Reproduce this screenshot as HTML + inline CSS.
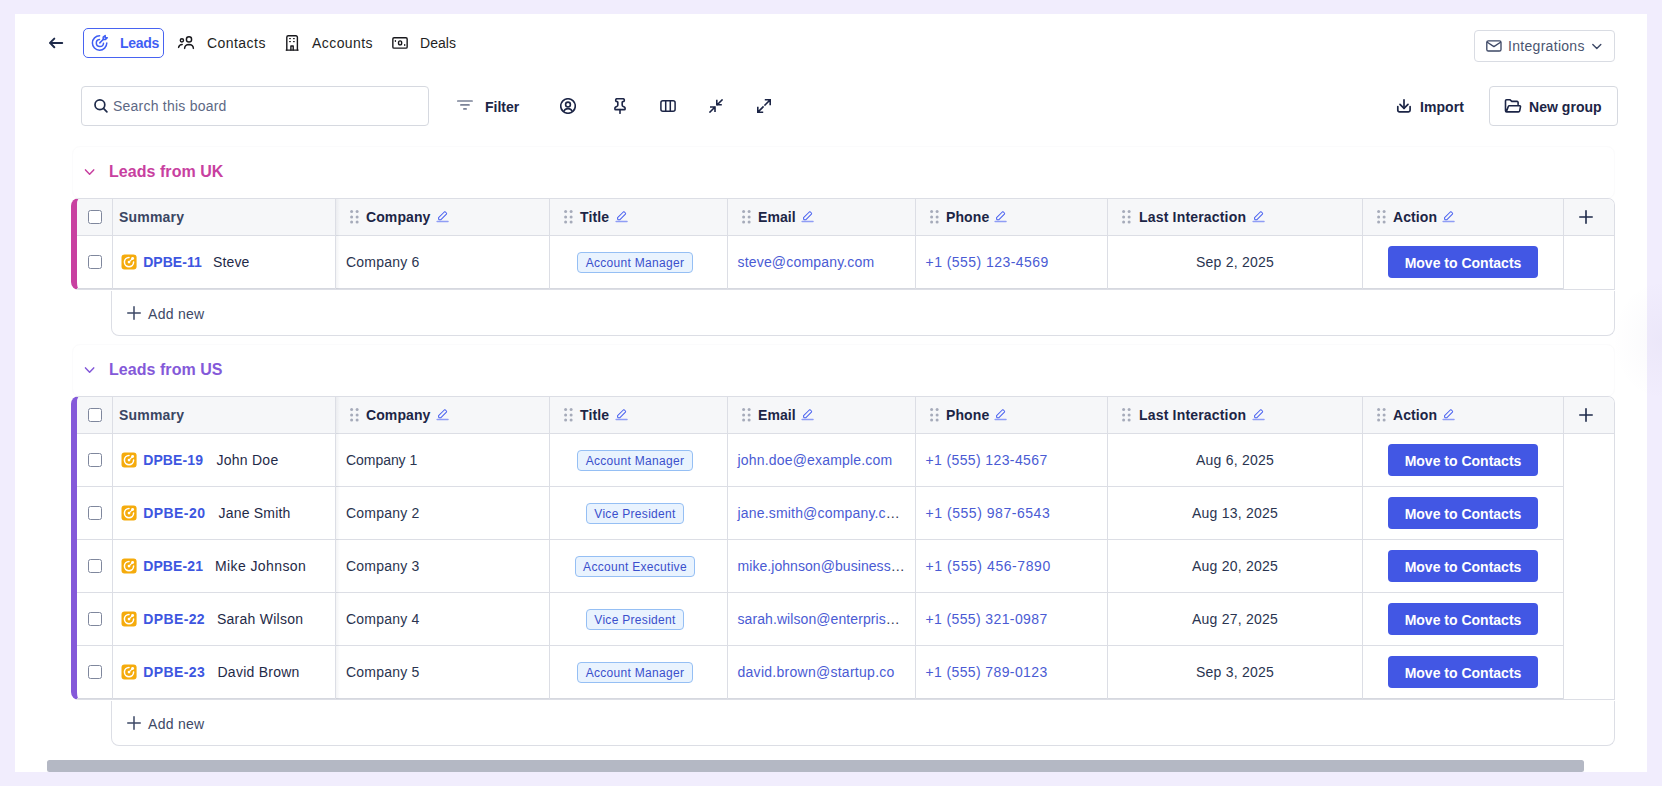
<!DOCTYPE html>
<html><head><meta charset="utf-8"><style>
html,body{margin:0;padding:0}
body{width:1662px;height:786px;overflow:hidden;background:#f1edfd;position:relative;font-family:"Liberation Sans",sans-serif}
.card{position:absolute;left:15px;top:14px;width:1632px;height:758px;background:#fff}
.t{position:absolute;height:20px;line-height:20px;white-space:nowrap}
.badge{position:absolute;height:21px;box-sizing:border-box;border:1px solid #95bff4;background:#e9f3fe;border-radius:4px;color:#3a4fcc;font-size:12px;line-height:20px;text-align:center;white-space:nowrap;letter-spacing:0.3px}
.btn{position:absolute;width:150px;height:32px;background:#4257e4;border-radius:4px;color:#fff;font-size:14px;font-weight:700;line-height:34px;text-align:center;white-space:nowrap}
</style></head><body>
<div class="card"></div>
<svg style="position:absolute;left:44px;top:30px" width="26" height="26" viewBox="0 0 26 26" fill="none" stroke="#1e2a4a" stroke-width="2" stroke-linecap="round" stroke-linejoin="round"><path d="M6 12.9h12.2M6 12.9l4.3-4.3M6 12.9l4.3 4.3"/></svg>
<div style="position:absolute;left:83px;top:28px;width:81px;height:30px;border:1px solid #4863f1;border-radius:5px;box-sizing:border-box"></div>
<svg style="position:absolute;left:86px;top:30px" width="30" height="26" viewBox="0 0 30 26" fill="none" stroke="#3f5ef4" stroke-width="1.5" stroke-linecap="round" stroke-linejoin="round"><path d="M13.6 5.8A7.2 7.2 0 1 0 20.8 13.1"/><path d="M13.5 9.4A3.6 3.6 0 1 0 17.5 13.3"/><path d="M13.8 12.9L17.4 9.3"/><path d="M17.2 7.2v2.3h2.3l1.8-1.8h-2.1v-2.1z"/></svg>
<div class="t" style="left:120px;top:33.0px;font-size:14px;font-weight:700;color:#3f5ef4;letter-spacing:-0.3px;">Leads</div>
<svg style="position:absolute;left:174px;top:30px" width="30" height="26" viewBox="0 0 30 26" fill="none" stroke="#18181c" stroke-width="1.45" stroke-linecap="round" stroke-linejoin="round"><circle cx="7.9" cy="10.3" r="1.6"/><circle cx="15" cy="9.4" r="2.6"/><path d="M4.6 17.4Q5.2 14.6 8.2 14.5"/><path d="M10.6 18.4Q10.9 14.6 15 14.5Q19.1 14.6 19.4 18.4"/></svg>
<div class="t" style="left:207px;top:33.0px;font-size:14px;font-weight:400;color:#1f1f24;letter-spacing:0.45px;">Contacts</div>
<svg style="position:absolute;left:280px;top:30px" width="24" height="26" viewBox="0 0 24 26" fill="none" stroke="#18181c" stroke-width="1.4" stroke-linecap="round" stroke-linejoin="round"><path d="M6.2 20.1h11.9"/><path d="M6.8 20.1V7.2a1.5 1.5 0 0 1 1.5-1.5h7.6a1.5 1.5 0 0 1 1.5 1.5v12.9"/><path d="M9.7 8.6h.6M13.6 8.6h.6M9.7 11.6h.6M13.6 11.6h.6"/><path d="M10.9 20.1v-4.1h2.3v4.1"/></svg>
<div class="t" style="left:312px;top:33.0px;font-size:14px;font-weight:400;color:#1f1f24;letter-spacing:0.43px;">Accounts</div>
<svg style="position:absolute;left:386px;top:30px" width="28" height="26" viewBox="0 0 28 26" fill="none" stroke="#18181c" stroke-width="1.4" stroke-linecap="round" stroke-linejoin="round"><rect x="6.85" y="7.75" width="14.3" height="10.4" rx="1.2"/><ellipse cx="14.1" cy="12.9" rx="1.6" ry="2"/><path d="M9.4 10.6v.6M18.7 14.7v.6"/></svg>
<div class="t" style="left:420px;top:33.0px;font-size:14px;font-weight:400;color:#1f1f24;letter-spacing:0.05px;">Deals</div>
<div style="position:absolute;left:1474px;top:30px;width:141px;height:32px;border:1px solid #d9dce3;border-radius:4px;box-sizing:border-box"></div>
<svg style="position:absolute;left:1480px;top:34px" width="30" height="24" viewBox="0 0 30 24" fill="none" stroke="#3d4866" stroke-width="1.35" stroke-linecap="round" stroke-linejoin="round"><rect x="6.8" y="6.8" width="14.2" height="10.2" rx="1.6"/><path d="M7.3 8.2l6.6 4.4 6.6-4.4"/></svg>
<div class="t" style="left:1508px;top:36.0px;font-size:14px;font-weight:400;color:#4a5570;letter-spacing:0.3px;">Integrations</div>
<svg style="position:absolute;left:1588px;top:40px" width="18" height="14" viewBox="0 0 18 14" fill="none" stroke="#3d4866" stroke-width="1.4" stroke-linecap="round" stroke-linejoin="round"><path d="M4.8 4.6l4 4 4-4"/></svg>
<div style="position:absolute;left:81px;top:86px;width:348px;height:40px;border:1px solid #d6d9e0;border-radius:4px;box-sizing:border-box"></div>
<svg style="position:absolute;left:88px;top:94px" width="26" height="24" viewBox="0 0 26 24" fill="none" stroke="#1e2a4a" stroke-width="1.7" stroke-linecap="round"><circle cx="11.9" cy="10.8" r="4.9"/><path d="M15.5 14.4l3.4 3.4"/></svg>
<div class="t" style="left:113px;top:96.0px;font-size:14px;font-weight:400;color:#5d6884;letter-spacing:0.23px;">Search this board</div>
<svg style="position:absolute;left:450px;top:92px" width="30" height="26" viewBox="0 0 30 26" fill="none" stroke="#7b8398" stroke-width="1.7" stroke-linecap="round"><path d="M7.8 9h14.3M10.9 12.9h8.1M13.9 16.9h2.2"/></svg>
<div class="t" style="left:485px;top:96.5px;font-size:14px;font-weight:700;color:#1c2546;letter-spacing:0px;">Filter</div>
<svg style="position:absolute;left:560px;top:98px;" width="16" height="16" viewBox="1 1 22 22" fill="none" stroke="#1c2546" stroke-width="2.2" stroke-linecap="round" stroke-linejoin="round"><circle cx="12" cy="12" r="10"/><circle cx="12" cy="10" r="3.3"/><path d="M6.2 19.2a6.5 6.5 0 0 1 11.6 0"/></svg>
<svg style="position:absolute;left:611.8px;top:98px;" width="16" height="16" viewBox="1 1 22 22" fill="none" stroke="#1c2546" stroke-width="2.2" stroke-linecap="round" stroke-linejoin="round"><path d="M12 17v5"/><path d="M9 10.76a2 2 0 0 1-1.11 1.79l-1.78.9A2 2 0 0 0 5 15.24V16a1 1 0 0 0 1 1h12a1 1 0 0 0 1-1v-.76a2 2 0 0 0-1.11-1.79l-1.78-.9A2 2 0 0 1 15 10.76V7a1 1 0 0 1 1-1 2 2 0 0 0 0-4H8a2 2 0 0 0 0 4 1 1 0 0 1 1 1z"/></svg>
<svg style="position:absolute;left:659px;top:98px;" width="18" height="16" viewBox="0 0 18 16" fill="none" stroke="#1c2546" stroke-width="1.5" stroke-linecap="round" stroke-linejoin="round"><rect x="1.9" y="2.75" width="14.2" height="10.6" rx="2"/><path d="M6.7 2.75v10.6M11.3 2.75v10.6"/></svg>
<svg style="position:absolute;left:709px;top:99px" width="14" height="14" viewBox="0 0 14 14" fill="none" stroke="#1c2546" stroke-width="1.6" stroke-linecap="square"><path d="M13 1L8.2 5.8M7.8 1.6v4.2h4.2M1 13l4.8-4.8M1.8 8h4.2v4.2"/></svg>
<svg style="position:absolute;left:757px;top:99px" width="14" height="14" viewBox="0 0 14 14" fill="none" stroke="#1c2546" stroke-width="1.6" stroke-linecap="square"><path d="M8.6 0.8h4.6v4.6M13 1L8 6M0.8 8.6v4.6h4.6M1 13l5-5"/></svg>
<svg style="position:absolute;left:1390px;top:94px" width="26" height="26" viewBox="0 0 26 26" fill="none" stroke="#1c2546" stroke-width="1.7" stroke-linecap="round" stroke-linejoin="round"><path d="M7.8 12.6v3.6a1.6 1.6 0 0 0 1.6 1.6h9.1a1.6 1.6 0 0 0 1.6-1.6v-3.6"/><path d="M10 10.3l4 4 4-4"/><path d="M14 5.8v8.5"/></svg>
<div class="t" style="left:1420px;top:97.0px;font-size:14px;font-weight:700;color:#1c2546;letter-spacing:0.07px;">Import</div>
<div style="position:absolute;left:1489px;top:86px;width:129px;height:40px;border:1px solid #d6d9e0;border-radius:4px;box-sizing:border-box"></div>
<svg style="position:absolute;left:1504px;top:98px" width="18" height="16" viewBox="0 0 18 16" fill="none" stroke="#1c2546" stroke-width="1.6" stroke-linecap="round" stroke-linejoin="round"><path d="M2.3 13.9l2.1-5.6a1 1 0 0 1 .9-.6h10.4a.8.8 0 0 1 .8 1l-.8 4.1a1.4 1.4 0 0 1-1.4 1.1H2.6a1.1 1.1 0 0 1-1.1-1.1V2.8A1.1 1.1 0 0 1 2.6 1.7h3.2l2 1.7h5.2a1.1 1.1 0 0 1 1.1 1.1v1.9"/></svg>
<div class="t" style="left:1529px;top:97.0px;font-size:14px;font-weight:700;color:#1c2546;letter-spacing:0.04px;">New group</div>
<svg style="position:absolute;left:80px;top:164px" width="20" height="16" viewBox="0 0 20 16" fill="none" stroke="#c840a0" stroke-width="1.5" stroke-linecap="round" stroke-linejoin="round"><path d="M5.5 5.9L9.6 10.2L13.7 5.9"/></svg>
<div class="t" style="left:109px;top:162.0px;font-size:16px;font-weight:700;color:#c840a0;letter-spacing:0.05px;">Leads from UK</div>
<div style="position:absolute;left:72px;top:146px;width:1543px;height:53px;border:1px solid #fbfbfc;border-radius:8px;box-sizing:border-box"></div>
<div style="position:absolute;left:71px;top:198px;width:1544px;height:92px;box-sizing:border-box;border:1px solid #dcdee5;border-left:6px solid #c840a0;border-radius:8px 7px 0 8px;overflow:hidden;background:#fff">
<div style="position:absolute;left:0;top:0;right:0;height:36px;background:#f6f7f9;border-bottom:1px solid #dcdee5"></div>
<div style="position:absolute;left:0;top:37px;width:1486px;height:53px;border-bottom:1px solid #dcdee5;box-sizing:border-box"></div>
</div>
<div style="position:absolute;left:77px;top:288px;width:1486px;height:1px;background:#d6d8df"></div>
<div style="position:absolute;left:112px;top:199px;width:1px;height:90px;background:#dcdee5"></div>
<div style="position:absolute;left:335px;top:199px;width:1px;height:90px;background:#dcdee5"></div>
<div style="position:absolute;left:549px;top:199px;width:1px;height:90px;background:#dcdee5"></div>
<div style="position:absolute;left:727px;top:199px;width:1px;height:90px;background:#dcdee5"></div>
<div style="position:absolute;left:915px;top:199px;width:1px;height:90px;background:#dcdee5"></div>
<div style="position:absolute;left:1107px;top:199px;width:1px;height:90px;background:#dcdee5"></div>
<div style="position:absolute;left:1362px;top:199px;width:1px;height:90px;background:#dcdee5"></div>
<div style="position:absolute;left:1563px;top:199px;width:1px;height:90px;background:#dcdee5"></div>
<div style="position:absolute;left:336px;top:199px;width:4px;height:90px;background:linear-gradient(90deg,rgba(20,30,60,0.05),rgba(20,30,60,0))"></div>
<div style="position:absolute;left:88px;top:210px;width:14px;height:14px;border:1.1px solid #7f879d;border-radius:2.5px;box-sizing:border-box;background:#fff"></div>
<div class="t" style="left:119px;top:206.75px;font-size:14px;font-weight:700;color:#3a4562;letter-spacing:0.2px;">Summary</div>
<svg style="position:absolute;left:349.5px;top:210px" width="9" height="14" viewBox="0 0 9 14" fill="#a6abba"><circle cx="1.6" cy="1.6" r="1.5"/><circle cx="1.6" cy="6.9" r="1.5"/><circle cx="1.6" cy="12.1" r="1.5"/><circle cx="7.1" cy="1.6" r="1.5"/><circle cx="7.1" cy="6.9" r="1.5"/><circle cx="7.1" cy="12.1" r="1.5"/></svg>
<div class="t" style="left:366px;top:206.75px;font-size:14px;font-weight:700;color:#1c2546;letter-spacing:0.1px;">Company</div>
<svg style="position:absolute;left:563.5px;top:210px" width="9" height="14" viewBox="0 0 9 14" fill="#a6abba"><circle cx="1.6" cy="1.6" r="1.5"/><circle cx="1.6" cy="6.9" r="1.5"/><circle cx="1.6" cy="12.1" r="1.5"/><circle cx="7.1" cy="1.6" r="1.5"/><circle cx="7.1" cy="6.9" r="1.5"/><circle cx="7.1" cy="12.1" r="1.5"/></svg>
<div class="t" style="left:580px;top:206.75px;font-size:14px;font-weight:700;color:#1c2546;letter-spacing:0.1px;">Title</div>
<svg style="position:absolute;left:741.5px;top:210px" width="9" height="14" viewBox="0 0 9 14" fill="#a6abba"><circle cx="1.6" cy="1.6" r="1.5"/><circle cx="1.6" cy="6.9" r="1.5"/><circle cx="1.6" cy="12.1" r="1.5"/><circle cx="7.1" cy="1.6" r="1.5"/><circle cx="7.1" cy="6.9" r="1.5"/><circle cx="7.1" cy="12.1" r="1.5"/></svg>
<div class="t" style="left:758px;top:206.75px;font-size:14px;font-weight:700;color:#1c2546;letter-spacing:0.1px;">Email</div>
<svg style="position:absolute;left:929.5px;top:210px" width="9" height="14" viewBox="0 0 9 14" fill="#a6abba"><circle cx="1.6" cy="1.6" r="1.5"/><circle cx="1.6" cy="6.9" r="1.5"/><circle cx="1.6" cy="12.1" r="1.5"/><circle cx="7.1" cy="1.6" r="1.5"/><circle cx="7.1" cy="6.9" r="1.5"/><circle cx="7.1" cy="12.1" r="1.5"/></svg>
<div class="t" style="left:946px;top:206.75px;font-size:14px;font-weight:700;color:#1c2546;letter-spacing:0.1px;">Phone</div>
<svg style="position:absolute;left:1121.5px;top:210px" width="9" height="14" viewBox="0 0 9 14" fill="#a6abba"><circle cx="1.6" cy="1.6" r="1.5"/><circle cx="1.6" cy="6.9" r="1.5"/><circle cx="1.6" cy="12.1" r="1.5"/><circle cx="7.1" cy="1.6" r="1.5"/><circle cx="7.1" cy="6.9" r="1.5"/><circle cx="7.1" cy="12.1" r="1.5"/></svg>
<div class="t" style="left:1139px;top:206.75px;font-size:14px;font-weight:700;color:#1c2546;letter-spacing:0.18px;">Last Interaction</div>
<svg style="position:absolute;left:1376.5px;top:210px" width="9" height="14" viewBox="0 0 9 14" fill="#a6abba"><circle cx="1.6" cy="1.6" r="1.5"/><circle cx="1.6" cy="6.9" r="1.5"/><circle cx="1.6" cy="12.1" r="1.5"/><circle cx="7.1" cy="1.6" r="1.5"/><circle cx="7.1" cy="6.9" r="1.5"/><circle cx="7.1" cy="12.1" r="1.5"/></svg>
<div class="t" style="left:1393px;top:206.75px;font-size:14px;font-weight:700;color:#1c2546;letter-spacing:0.1px;">Action</div>
<svg style="position:absolute;left:435.5px;top:210px" width="13" height="13" viewBox="0 0 13 13" fill="none" stroke-linecap="round" stroke-linejoin="round"><path d="M1.1 11.6h10.9" stroke="#8f9df5" stroke-width="1.5"/><path d="M2.6 9.1V7.7l5.7-5.7a.8.8 0 0 1 1.1 0l1 1a.8.8 0 0 1 0 1.1L4.7 9.8H3.3z" stroke="#4a62f0" stroke-width="1.05"/></svg>
<svg style="position:absolute;left:614.5px;top:210px" width="13" height="13" viewBox="0 0 13 13" fill="none" stroke-linecap="round" stroke-linejoin="round"><path d="M1.1 11.6h10.9" stroke="#8f9df5" stroke-width="1.5"/><path d="M2.6 9.1V7.7l5.7-5.7a.8.8 0 0 1 1.1 0l1 1a.8.8 0 0 1 0 1.1L4.7 9.8H3.3z" stroke="#4a62f0" stroke-width="1.05"/></svg>
<svg style="position:absolute;left:800.5px;top:210px" width="13" height="13" viewBox="0 0 13 13" fill="none" stroke-linecap="round" stroke-linejoin="round"><path d="M1.1 11.6h10.9" stroke="#8f9df5" stroke-width="1.5"/><path d="M2.6 9.1V7.7l5.7-5.7a.8.8 0 0 1 1.1 0l1 1a.8.8 0 0 1 0 1.1L4.7 9.8H3.3z" stroke="#4a62f0" stroke-width="1.05"/></svg>
<svg style="position:absolute;left:993.5px;top:210px" width="13" height="13" viewBox="0 0 13 13" fill="none" stroke-linecap="round" stroke-linejoin="round"><path d="M1.1 11.6h10.9" stroke="#8f9df5" stroke-width="1.5"/><path d="M2.6 9.1V7.7l5.7-5.7a.8.8 0 0 1 1.1 0l1 1a.8.8 0 0 1 0 1.1L4.7 9.8H3.3z" stroke="#4a62f0" stroke-width="1.05"/></svg>
<svg style="position:absolute;left:1251.5px;top:210px" width="13" height="13" viewBox="0 0 13 13" fill="none" stroke-linecap="round" stroke-linejoin="round"><path d="M1.1 11.6h10.9" stroke="#8f9df5" stroke-width="1.5"/><path d="M2.6 9.1V7.7l5.7-5.7a.8.8 0 0 1 1.1 0l1 1a.8.8 0 0 1 0 1.1L4.7 9.8H3.3z" stroke="#4a62f0" stroke-width="1.05"/></svg>
<svg style="position:absolute;left:1441.5px;top:210px" width="13" height="13" viewBox="0 0 13 13" fill="none" stroke-linecap="round" stroke-linejoin="round"><path d="M1.1 11.6h10.9" stroke="#8f9df5" stroke-width="1.5"/><path d="M2.6 9.1V7.7l5.7-5.7a.8.8 0 0 1 1.1 0l1 1a.8.8 0 0 1 0 1.1L4.7 9.8H3.3z" stroke="#4a62f0" stroke-width="1.05"/></svg>
<svg style="position:absolute;left:1578px;top:209px;" width="16" height="16" viewBox="0 0 16 16" fill="none" stroke="#1e2a4a" stroke-width="1.6" stroke-linecap="round" stroke-linejoin="round"><path d="M8 1.8v12.4M1.8 8h12.4"/></svg>
<div style="position:absolute;left:88px;top:255px;width:14px;height:14px;border:1.1px solid #7f879d;border-radius:2.5px;box-sizing:border-box;background:#fff"></div>
<svg style="position:absolute;left:121px;top:254px" width="16" height="16" viewBox="0 0 16 16"><g transform="translate(0.5 0.4)"><rect x="0" y="0" width="15.1" height="15.1" rx="3" fill="#f5ab0c"/><path d="M7.5 3.1A4.6 4.6 0 1 0 12.1 7.7" fill="none" stroke="#fff" stroke-width="1.5" stroke-linecap="round"/><circle cx="7.5" cy="7.7" r="1.35" fill="#fff"/><path d="M7.5 7.7L10.9 4.3" stroke="#fff" stroke-width="1.2"/><circle cx="11.1" cy="4.1" r="1.45" fill="#fff"/></g></svg>
<div class="t" style="left:143.2px;top:252.0px;font-size:14px;font-weight:700;color:#3d56e0;letter-spacing:0.04px;">DPBE-11</div>
<div class="t" style="left:213px;top:252.0px;font-size:14px;font-weight:400;color:#1f2a48;letter-spacing:0.15px;">Steve</div>
<div class="t" style="left:346px;top:252.0px;font-size:14px;font-weight:400;color:#2a3450;letter-spacing:0.22px;">Company 6</div>
<div class="badge" style="left:577.0px;top:252px;width:116px">Account Manager</div>
<div class="t" style="left:737.5px;top:252px;font-size:14px;color:#4a5bd4;letter-spacing:0.18px">steve@company.com</div>
<div class="t" style="left:925.5px;top:252.0px;font-size:14px;font-weight:400;color:#4a5bd4;letter-spacing:0.45px;">+1 (555) 123-4569</div>
<div class="t" style="left:1108px;width:254px;text-align:center;top:252px;font-size:14px;color:#2a3450;letter-spacing:0.23px">Sep 2, 2025</div>
<div class="btn" style="left:1388px;top:246px">Move to Contacts</div>
<div style="position:absolute;left:111px;top:291px;width:1504px;height:45px;box-sizing:border-box;border:1px solid #dcdee5;border-top:none;border-radius:0 0 8px 8px"></div>
<svg style="position:absolute;left:126px;top:305px;" width="16" height="16" viewBox="0 0 16 16" fill="none" stroke="#3d4866" stroke-width="1.5" stroke-linecap="round" stroke-linejoin="round"><path d="M8 1.75v12.5M1.75 8h12.5"/></svg>
<div class="t" style="left:148px;top:304.0px;font-size:14px;font-weight:400;color:#3d4866;letter-spacing:0.29px;">Add new</div>
<svg style="position:absolute;left:80px;top:362px" width="20" height="16" viewBox="0 0 20 16" fill="none" stroke="#8459d9" stroke-width="1.5" stroke-linecap="round" stroke-linejoin="round"><path d="M5.5 5.9L9.6 10.2L13.7 5.9"/></svg>
<div class="t" style="left:109px;top:360.0px;font-size:16px;font-weight:700;color:#8459d9;letter-spacing:0.05px;">Leads from US</div>
<div style="position:absolute;left:72px;top:344px;width:1543px;height:53px;border:1px solid #fbfbfc;border-radius:8px;box-sizing:border-box"></div>
<div style="position:absolute;left:71px;top:396px;width:1544px;height:304px;box-sizing:border-box;border:1px solid #dcdee5;border-left:6px solid #8459d9;border-radius:8px 7px 0 8px;overflow:hidden;background:#fff">
<div style="position:absolute;left:0;top:0;right:0;height:36px;background:#f6f7f9;border-bottom:1px solid #dcdee5"></div>
<div style="position:absolute;left:0;top:37px;width:1486px;height:53px;border-bottom:1px solid #dcdee5;box-sizing:border-box"></div>
<div style="position:absolute;left:0;top:90px;width:1486px;height:53px;border-bottom:1px solid #dcdee5;box-sizing:border-box"></div>
<div style="position:absolute;left:0;top:143px;width:1486px;height:53px;border-bottom:1px solid #dcdee5;box-sizing:border-box"></div>
<div style="position:absolute;left:0;top:196px;width:1486px;height:53px;border-bottom:1px solid #dcdee5;box-sizing:border-box"></div>
<div style="position:absolute;left:0;top:249px;width:1486px;height:53px;border-bottom:1px solid #dcdee5;box-sizing:border-box"></div>
</div>
<div style="position:absolute;left:77px;top:698px;width:1486px;height:1px;background:#d6d8df"></div>
<div style="position:absolute;left:112px;top:397px;width:1px;height:302px;background:#dcdee5"></div>
<div style="position:absolute;left:335px;top:397px;width:1px;height:302px;background:#dcdee5"></div>
<div style="position:absolute;left:549px;top:397px;width:1px;height:302px;background:#dcdee5"></div>
<div style="position:absolute;left:727px;top:397px;width:1px;height:302px;background:#dcdee5"></div>
<div style="position:absolute;left:915px;top:397px;width:1px;height:302px;background:#dcdee5"></div>
<div style="position:absolute;left:1107px;top:397px;width:1px;height:302px;background:#dcdee5"></div>
<div style="position:absolute;left:1362px;top:397px;width:1px;height:302px;background:#dcdee5"></div>
<div style="position:absolute;left:1563px;top:397px;width:1px;height:302px;background:#dcdee5"></div>
<div style="position:absolute;left:336px;top:397px;width:4px;height:302px;background:linear-gradient(90deg,rgba(20,30,60,0.05),rgba(20,30,60,0))"></div>
<div style="position:absolute;left:88px;top:408px;width:14px;height:14px;border:1.1px solid #7f879d;border-radius:2.5px;box-sizing:border-box;background:#fff"></div>
<div class="t" style="left:119px;top:404.75px;font-size:14px;font-weight:700;color:#3a4562;letter-spacing:0.2px;">Summary</div>
<svg style="position:absolute;left:349.5px;top:408px" width="9" height="14" viewBox="0 0 9 14" fill="#a6abba"><circle cx="1.6" cy="1.6" r="1.5"/><circle cx="1.6" cy="6.9" r="1.5"/><circle cx="1.6" cy="12.1" r="1.5"/><circle cx="7.1" cy="1.6" r="1.5"/><circle cx="7.1" cy="6.9" r="1.5"/><circle cx="7.1" cy="12.1" r="1.5"/></svg>
<div class="t" style="left:366px;top:404.75px;font-size:14px;font-weight:700;color:#1c2546;letter-spacing:0.1px;">Company</div>
<svg style="position:absolute;left:563.5px;top:408px" width="9" height="14" viewBox="0 0 9 14" fill="#a6abba"><circle cx="1.6" cy="1.6" r="1.5"/><circle cx="1.6" cy="6.9" r="1.5"/><circle cx="1.6" cy="12.1" r="1.5"/><circle cx="7.1" cy="1.6" r="1.5"/><circle cx="7.1" cy="6.9" r="1.5"/><circle cx="7.1" cy="12.1" r="1.5"/></svg>
<div class="t" style="left:580px;top:404.75px;font-size:14px;font-weight:700;color:#1c2546;letter-spacing:0.1px;">Title</div>
<svg style="position:absolute;left:741.5px;top:408px" width="9" height="14" viewBox="0 0 9 14" fill="#a6abba"><circle cx="1.6" cy="1.6" r="1.5"/><circle cx="1.6" cy="6.9" r="1.5"/><circle cx="1.6" cy="12.1" r="1.5"/><circle cx="7.1" cy="1.6" r="1.5"/><circle cx="7.1" cy="6.9" r="1.5"/><circle cx="7.1" cy="12.1" r="1.5"/></svg>
<div class="t" style="left:758px;top:404.75px;font-size:14px;font-weight:700;color:#1c2546;letter-spacing:0.1px;">Email</div>
<svg style="position:absolute;left:929.5px;top:408px" width="9" height="14" viewBox="0 0 9 14" fill="#a6abba"><circle cx="1.6" cy="1.6" r="1.5"/><circle cx="1.6" cy="6.9" r="1.5"/><circle cx="1.6" cy="12.1" r="1.5"/><circle cx="7.1" cy="1.6" r="1.5"/><circle cx="7.1" cy="6.9" r="1.5"/><circle cx="7.1" cy="12.1" r="1.5"/></svg>
<div class="t" style="left:946px;top:404.75px;font-size:14px;font-weight:700;color:#1c2546;letter-spacing:0.1px;">Phone</div>
<svg style="position:absolute;left:1121.5px;top:408px" width="9" height="14" viewBox="0 0 9 14" fill="#a6abba"><circle cx="1.6" cy="1.6" r="1.5"/><circle cx="1.6" cy="6.9" r="1.5"/><circle cx="1.6" cy="12.1" r="1.5"/><circle cx="7.1" cy="1.6" r="1.5"/><circle cx="7.1" cy="6.9" r="1.5"/><circle cx="7.1" cy="12.1" r="1.5"/></svg>
<div class="t" style="left:1139px;top:404.75px;font-size:14px;font-weight:700;color:#1c2546;letter-spacing:0.18px;">Last Interaction</div>
<svg style="position:absolute;left:1376.5px;top:408px" width="9" height="14" viewBox="0 0 9 14" fill="#a6abba"><circle cx="1.6" cy="1.6" r="1.5"/><circle cx="1.6" cy="6.9" r="1.5"/><circle cx="1.6" cy="12.1" r="1.5"/><circle cx="7.1" cy="1.6" r="1.5"/><circle cx="7.1" cy="6.9" r="1.5"/><circle cx="7.1" cy="12.1" r="1.5"/></svg>
<div class="t" style="left:1393px;top:404.75px;font-size:14px;font-weight:700;color:#1c2546;letter-spacing:0.1px;">Action</div>
<svg style="position:absolute;left:435.5px;top:408px" width="13" height="13" viewBox="0 0 13 13" fill="none" stroke-linecap="round" stroke-linejoin="round"><path d="M1.1 11.6h10.9" stroke="#8f9df5" stroke-width="1.5"/><path d="M2.6 9.1V7.7l5.7-5.7a.8.8 0 0 1 1.1 0l1 1a.8.8 0 0 1 0 1.1L4.7 9.8H3.3z" stroke="#4a62f0" stroke-width="1.05"/></svg>
<svg style="position:absolute;left:614.5px;top:408px" width="13" height="13" viewBox="0 0 13 13" fill="none" stroke-linecap="round" stroke-linejoin="round"><path d="M1.1 11.6h10.9" stroke="#8f9df5" stroke-width="1.5"/><path d="M2.6 9.1V7.7l5.7-5.7a.8.8 0 0 1 1.1 0l1 1a.8.8 0 0 1 0 1.1L4.7 9.8H3.3z" stroke="#4a62f0" stroke-width="1.05"/></svg>
<svg style="position:absolute;left:800.5px;top:408px" width="13" height="13" viewBox="0 0 13 13" fill="none" stroke-linecap="round" stroke-linejoin="round"><path d="M1.1 11.6h10.9" stroke="#8f9df5" stroke-width="1.5"/><path d="M2.6 9.1V7.7l5.7-5.7a.8.8 0 0 1 1.1 0l1 1a.8.8 0 0 1 0 1.1L4.7 9.8H3.3z" stroke="#4a62f0" stroke-width="1.05"/></svg>
<svg style="position:absolute;left:993.5px;top:408px" width="13" height="13" viewBox="0 0 13 13" fill="none" stroke-linecap="round" stroke-linejoin="round"><path d="M1.1 11.6h10.9" stroke="#8f9df5" stroke-width="1.5"/><path d="M2.6 9.1V7.7l5.7-5.7a.8.8 0 0 1 1.1 0l1 1a.8.8 0 0 1 0 1.1L4.7 9.8H3.3z" stroke="#4a62f0" stroke-width="1.05"/></svg>
<svg style="position:absolute;left:1251.5px;top:408px" width="13" height="13" viewBox="0 0 13 13" fill="none" stroke-linecap="round" stroke-linejoin="round"><path d="M1.1 11.6h10.9" stroke="#8f9df5" stroke-width="1.5"/><path d="M2.6 9.1V7.7l5.7-5.7a.8.8 0 0 1 1.1 0l1 1a.8.8 0 0 1 0 1.1L4.7 9.8H3.3z" stroke="#4a62f0" stroke-width="1.05"/></svg>
<svg style="position:absolute;left:1441.5px;top:408px" width="13" height="13" viewBox="0 0 13 13" fill="none" stroke-linecap="round" stroke-linejoin="round"><path d="M1.1 11.6h10.9" stroke="#8f9df5" stroke-width="1.5"/><path d="M2.6 9.1V7.7l5.7-5.7a.8.8 0 0 1 1.1 0l1 1a.8.8 0 0 1 0 1.1L4.7 9.8H3.3z" stroke="#4a62f0" stroke-width="1.05"/></svg>
<svg style="position:absolute;left:1578px;top:407px;" width="16" height="16" viewBox="0 0 16 16" fill="none" stroke="#1e2a4a" stroke-width="1.6" stroke-linecap="round" stroke-linejoin="round"><path d="M8 1.8v12.4M1.8 8h12.4"/></svg>
<div style="position:absolute;left:88px;top:453px;width:14px;height:14px;border:1.1px solid #7f879d;border-radius:2.5px;box-sizing:border-box;background:#fff"></div>
<svg style="position:absolute;left:121px;top:452px" width="16" height="16" viewBox="0 0 16 16"><g transform="translate(0.5 0.4)"><rect x="0" y="0" width="15.1" height="15.1" rx="3" fill="#f5ab0c"/><path d="M7.5 3.1A4.6 4.6 0 1 0 12.1 7.7" fill="none" stroke="#fff" stroke-width="1.5" stroke-linecap="round"/><circle cx="7.5" cy="7.7" r="1.35" fill="#fff"/><path d="M7.5 7.7L10.9 4.3" stroke="#fff" stroke-width="1.2"/><circle cx="11.1" cy="4.1" r="1.45" fill="#fff"/></g></svg>
<div class="t" style="left:143.2px;top:450.0px;font-size:14px;font-weight:700;color:#3d56e0;letter-spacing:0.1px;">DPBE-19</div>
<div class="t" style="left:216.5px;top:450.0px;font-size:14px;font-weight:400;color:#1f2a48;letter-spacing:0.25px;">John Doe</div>
<div class="t" style="left:346px;top:450.0px;font-size:14px;font-weight:400;color:#2a3450;letter-spacing:-0.05px;">Company 1</div>
<div class="badge" style="left:577.0px;top:450px;width:116px">Account Manager</div>
<div class="t" style="left:737.5px;top:450px;font-size:14px;color:#4a5bd4;letter-spacing:0.18px">john.doe@example.com</div>
<div class="t" style="left:925.5px;top:450.0px;font-size:14px;font-weight:400;color:#4a5bd4;letter-spacing:0.38px;">+1 (555) 123-4567</div>
<div class="t" style="left:1108px;width:254px;text-align:center;top:450px;font-size:14px;color:#2a3450;letter-spacing:0.23px">Aug 6, 2025</div>
<div class="btn" style="left:1388px;top:444px">Move to Contacts</div>
<div style="position:absolute;left:88px;top:506px;width:14px;height:14px;border:1.1px solid #7f879d;border-radius:2.5px;box-sizing:border-box;background:#fff"></div>
<svg style="position:absolute;left:121px;top:505px" width="16" height="16" viewBox="0 0 16 16"><g transform="translate(0.5 0.4)"><rect x="0" y="0" width="15.1" height="15.1" rx="3" fill="#f5ab0c"/><path d="M7.5 3.1A4.6 4.6 0 1 0 12.1 7.7" fill="none" stroke="#fff" stroke-width="1.5" stroke-linecap="round"/><circle cx="7.5" cy="7.7" r="1.35" fill="#fff"/><path d="M7.5 7.7L10.9 4.3" stroke="#fff" stroke-width="1.2"/><circle cx="11.1" cy="4.1" r="1.45" fill="#fff"/></g></svg>
<div class="t" style="left:143.2px;top:503.0px;font-size:14px;font-weight:700;color:#3d56e0;letter-spacing:0.44px;">DPBE-20</div>
<div class="t" style="left:218.5px;top:503.0px;font-size:14px;font-weight:400;color:#1f2a48;letter-spacing:0.2px;">Jane Smith</div>
<div class="t" style="left:346px;top:503.0px;font-size:14px;font-weight:400;color:#2a3450;letter-spacing:0.22px;">Company 2</div>
<div class="badge" style="left:586.0px;top:503px;width:98px">Vice President</div>
<div class="t" style="left:737.5px;top:503px;font-size:14px;color:#4a5bd4;letter-spacing:0.18px">jane.smith@company.c<span style="color:#2a3450">…</span></div>
<div class="t" style="left:925.5px;top:503.0px;font-size:14px;font-weight:400;color:#4a5bd4;letter-spacing:0.54px;">+1 (555) 987-6543</div>
<div class="t" style="left:1108px;width:254px;text-align:center;top:503px;font-size:14px;color:#2a3450;letter-spacing:0.23px">Aug 13, 2025</div>
<div class="btn" style="left:1388px;top:497px">Move to Contacts</div>
<div style="position:absolute;left:88px;top:559px;width:14px;height:14px;border:1.1px solid #7f879d;border-radius:2.5px;box-sizing:border-box;background:#fff"></div>
<svg style="position:absolute;left:121px;top:558px" width="16" height="16" viewBox="0 0 16 16"><g transform="translate(0.5 0.4)"><rect x="0" y="0" width="15.1" height="15.1" rx="3" fill="#f5ab0c"/><path d="M7.5 3.1A4.6 4.6 0 1 0 12.1 7.7" fill="none" stroke="#fff" stroke-width="1.5" stroke-linecap="round"/><circle cx="7.5" cy="7.7" r="1.35" fill="#fff"/><path d="M7.5 7.7L10.9 4.3" stroke="#fff" stroke-width="1.2"/><circle cx="11.1" cy="4.1" r="1.45" fill="#fff"/></g></svg>
<div class="t" style="left:143.2px;top:556.0px;font-size:14px;font-weight:700;color:#3d56e0;letter-spacing:0.1px;">DPBE-21</div>
<div class="t" style="left:215px;top:556.0px;font-size:14px;font-weight:400;color:#1f2a48;letter-spacing:0.4px;">Mike Johnson</div>
<div class="t" style="left:346px;top:556.0px;font-size:14px;font-weight:400;color:#2a3450;letter-spacing:0.22px;">Company 3</div>
<div class="badge" style="left:575.0px;top:556px;width:120px">Account Executive</div>
<div class="t" style="left:737.5px;top:556px;font-size:14px;color:#4a5bd4;letter-spacing:0.06px">mike.johnson@business<span style="color:#2a3450">…</span></div>
<div class="t" style="left:925.5px;top:556.0px;font-size:14px;font-weight:400;color:#4a5bd4;letter-spacing:0.57px;">+1 (555) 456-7890</div>
<div class="t" style="left:1108px;width:254px;text-align:center;top:556px;font-size:14px;color:#2a3450;letter-spacing:0.23px">Aug 20, 2025</div>
<div class="btn" style="left:1388px;top:550px">Move to Contacts</div>
<div style="position:absolute;left:88px;top:612px;width:14px;height:14px;border:1.1px solid #7f879d;border-radius:2.5px;box-sizing:border-box;background:#fff"></div>
<svg style="position:absolute;left:121px;top:611px" width="16" height="16" viewBox="0 0 16 16"><g transform="translate(0.5 0.4)"><rect x="0" y="0" width="15.1" height="15.1" rx="3" fill="#f5ab0c"/><path d="M7.5 3.1A4.6 4.6 0 1 0 12.1 7.7" fill="none" stroke="#fff" stroke-width="1.5" stroke-linecap="round"/><circle cx="7.5" cy="7.7" r="1.35" fill="#fff"/><path d="M7.5 7.7L10.9 4.3" stroke="#fff" stroke-width="1.2"/><circle cx="11.1" cy="4.1" r="1.45" fill="#fff"/></g></svg>
<div class="t" style="left:143.2px;top:609.0px;font-size:14px;font-weight:700;color:#3d56e0;letter-spacing:0.39px;">DPBE-22</div>
<div class="t" style="left:217px;top:609.0px;font-size:14px;font-weight:400;color:#1f2a48;letter-spacing:0.25px;">Sarah Wilson</div>
<div class="t" style="left:346px;top:609.0px;font-size:14px;font-weight:400;color:#2a3450;letter-spacing:0.22px;">Company 4</div>
<div class="badge" style="left:586.0px;top:609px;width:98px">Vice President</div>
<div class="t" style="left:737.5px;top:609px;font-size:14px;color:#4a5bd4;letter-spacing:0.08px">sarah.wilson@enterpris<span style="color:#2a3450">…</span></div>
<div class="t" style="left:925.5px;top:609.0px;font-size:14px;font-weight:400;color:#4a5bd4;letter-spacing:0.38px;">+1 (555) 321-0987</div>
<div class="t" style="left:1108px;width:254px;text-align:center;top:609px;font-size:14px;color:#2a3450;letter-spacing:0.23px">Aug 27, 2025</div>
<div class="btn" style="left:1388px;top:603px">Move to Contacts</div>
<div style="position:absolute;left:88px;top:665px;width:14px;height:14px;border:1.1px solid #7f879d;border-radius:2.5px;box-sizing:border-box;background:#fff"></div>
<svg style="position:absolute;left:121px;top:664px" width="16" height="16" viewBox="0 0 16 16"><g transform="translate(0.5 0.4)"><rect x="0" y="0" width="15.1" height="15.1" rx="3" fill="#f5ab0c"/><path d="M7.5 3.1A4.6 4.6 0 1 0 12.1 7.7" fill="none" stroke="#fff" stroke-width="1.5" stroke-linecap="round"/><circle cx="7.5" cy="7.7" r="1.35" fill="#fff"/><path d="M7.5 7.7L10.9 4.3" stroke="#fff" stroke-width="1.2"/><circle cx="11.1" cy="4.1" r="1.45" fill="#fff"/></g></svg>
<div class="t" style="left:143.2px;top:662.0px;font-size:14px;font-weight:700;color:#3d56e0;letter-spacing:0.42px;">DPBE-23</div>
<div class="t" style="left:217.5px;top:662.0px;font-size:14px;font-weight:400;color:#1f2a48;letter-spacing:0.25px;">David Brown</div>
<div class="t" style="left:346px;top:662.0px;font-size:14px;font-weight:400;color:#2a3450;letter-spacing:0.22px;">Company 5</div>
<div class="badge" style="left:577.0px;top:662px;width:116px">Account Manager</div>
<div class="t" style="left:737.5px;top:662px;font-size:14px;color:#4a5bd4;letter-spacing:0.27px">david.brown@startup.co</div>
<div class="t" style="left:925.5px;top:662.0px;font-size:14px;font-weight:400;color:#4a5bd4;letter-spacing:0.38px;">+1 (555) 789-0123</div>
<div class="t" style="left:1108px;width:254px;text-align:center;top:662px;font-size:14px;color:#2a3450;letter-spacing:0.23px">Sep 3, 2025</div>
<div class="btn" style="left:1388px;top:656px">Move to Contacts</div>
<div style="position:absolute;left:111px;top:701px;width:1504px;height:45px;box-sizing:border-box;border:1px solid #dcdee5;border-top:none;border-radius:0 0 8px 8px"></div>
<svg style="position:absolute;left:126px;top:715px;" width="16" height="16" viewBox="0 0 16 16" fill="none" stroke="#3d4866" stroke-width="1.5" stroke-linecap="round" stroke-linejoin="round"><path d="M8 1.75v12.5M1.75 8h12.5"/></svg>
<div class="t" style="left:148px;top:714.0px;font-size:14px;font-weight:400;color:#3d4866;letter-spacing:0.29px;">Add new</div>
<div style="position:absolute;left:1612px;top:280px;width:100px;height:120px;background:radial-gradient(closest-side,rgba(70,50,130,0.03),rgba(70,50,130,0))"></div>
<div style="position:absolute;left:47px;top:760px;width:1537px;height:12px;background:#b4b8c4;border-radius:2.5px"></div>
</body></html>
